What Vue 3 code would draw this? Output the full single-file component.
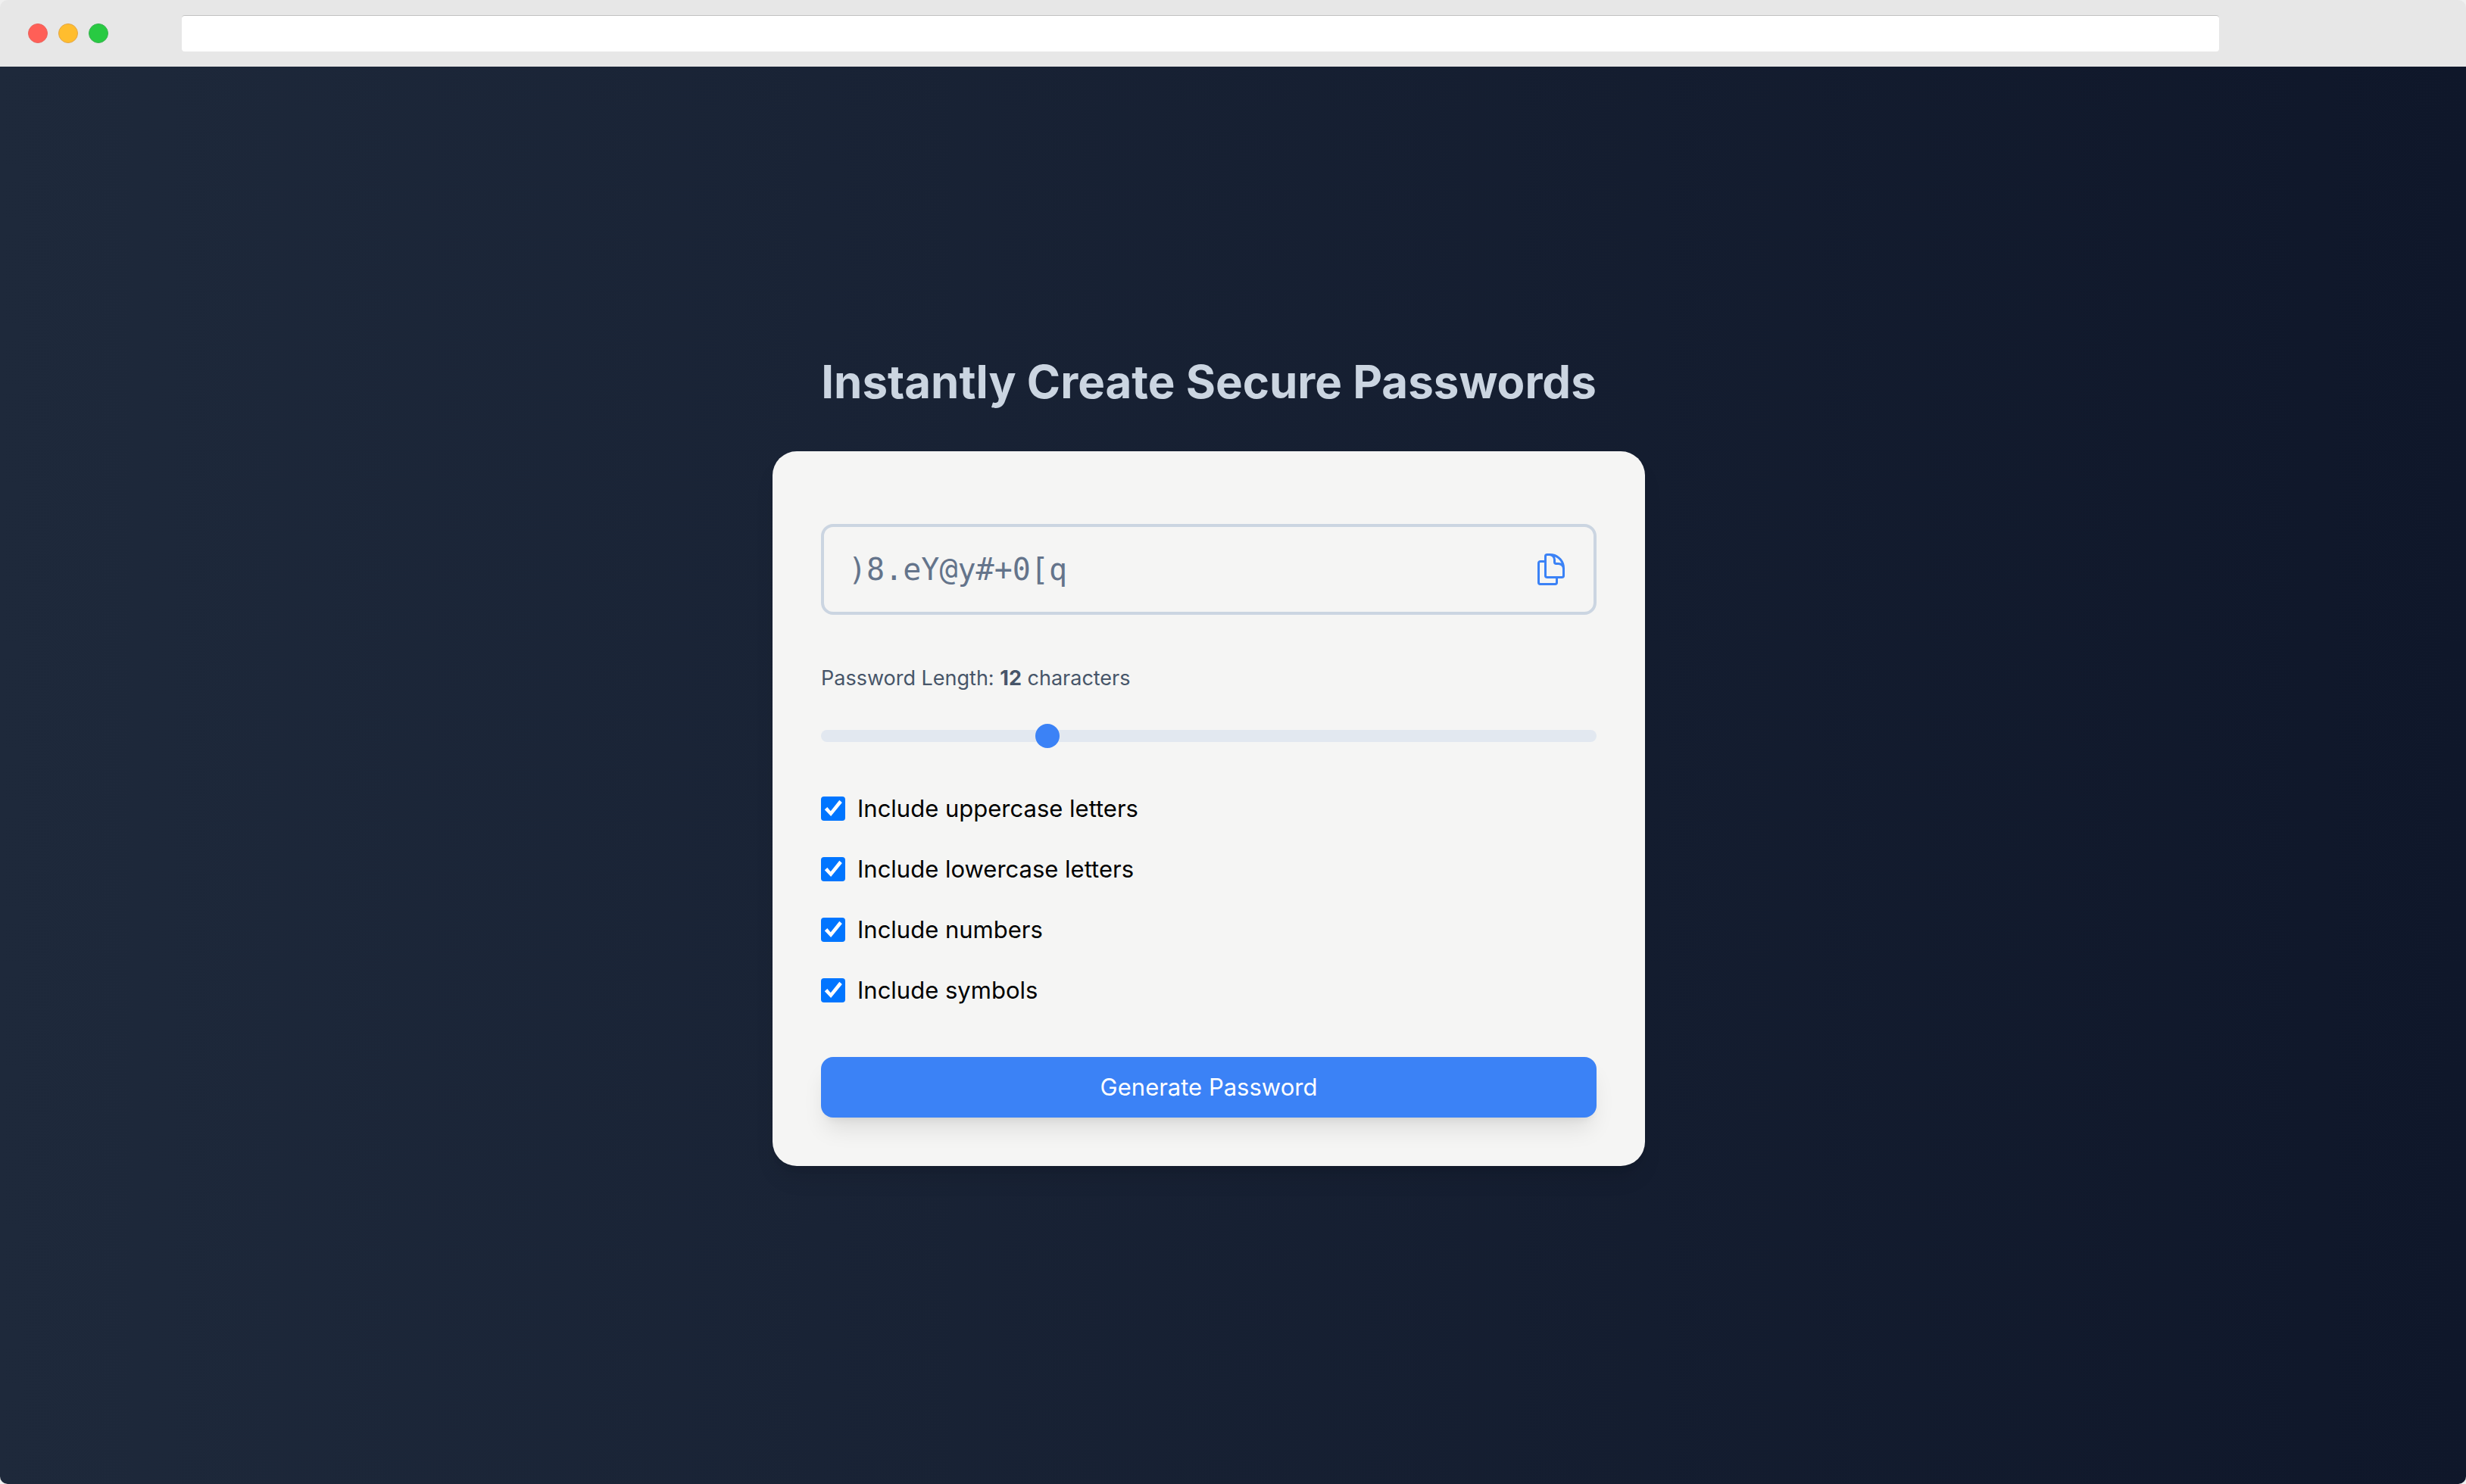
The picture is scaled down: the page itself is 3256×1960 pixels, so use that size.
<script setup>
import { reactive, ref } from 'vue'

const password = ref(')8.eY@y#+0[q')
const length = ref(12)

const options = reactive([
  { id: 'uppercase', label: 'Include uppercase letters', chars: 'ABCDEFGHIJKLMNOPQRSTUVWXYZ', on: true },
  { id: 'lowercase', label: 'Include lowercase letters', chars: 'abcdefghijklmnopqrstuvwxyz', on: true },
  { id: 'numbers', label: 'Include numbers', chars: '0123456789', on: true },
  { id: 'symbols', label: 'Include symbols', chars: '!@#$%^&*()_+[]{}.,?', on: true }
])

function generate() {
  const pool = options.filter((o) => o.on).map((o) => o.chars).join('')
  if (!pool) return
  const values = crypto.getRandomValues(new Uint32Array(Number(length.value)))
  password.value = Array.from(values, (v) => pool[v % pool.length]).join('')
}

function copy() {
  navigator.clipboard?.writeText(password.value)
}
</script>

<template>
  <div class="window">
    <header class="titlebar">
      <div class="lights">
        <span class="light red"></span>
        <span class="light amber"></span>
        <span class="light green"></span>
      </div>
      <input class="address" type="text" aria-label="Address" />
    </header>

    <main class="page">
      <h1>Instantly Create Secure Passwords</h1>

      <form class="card" @submit.prevent="generate">
        <div class="output">
          <input class="password" type="text" aria-label="Generated password" :value="password" readonly />
          <button class="copy" type="button" aria-label="Copy password" @click="copy">
            <svg viewBox="0 0 24 24" fill="none" stroke="currentColor" stroke-width="1.5" stroke-linecap="round" stroke-linejoin="round">
              <path d="M15.75 17.25v3.375c0 .621-.504 1.125-1.125 1.125h-9.75a1.125 1.125 0 0 1-1.125-1.125V7.875c0-.621.504-1.125 1.125-1.125H6.75a9.06 9.06 0 0 1 1.5.124m7.5 10.376h3.375c.621 0 1.125-.504 1.125-1.125V11.25c0-4.46-3.243-8.161-7.5-8.876a9.06 9.06 0 0 0-1.5-.124H9.375c-.621 0-1.125.504-1.125 1.125v3.5m7.5 10.375H9.375a1.125 1.125 0 0 1-1.125-1.125v-9.25m12 6.625v-1.875a3.375 3.375 0 0 0-3.375-3.375h-1.5a1.125 1.125 0 0 1-1.125-1.125v-1.5a3.375 3.375 0 0 0-3.375-3.375H9.75" />
            </svg>
          </button>
        </div>

        <label class="length" for="length">Password Length: <strong>{{ length }}</strong> characters</label>
        <input id="length" v-model="length" class="slider" type="range" min="4" max="32" />

        <div class="options">
          <div v-for="option in options" :key="option.id" class="option">
            <input :id="option.id" v-model="option.on" type="checkbox" />
            <label :for="option.id">{{ option.label }}</label>
          </div>
        </div>

        <button class="generate" type="submit">Generate Password</button>
      </form>
    </main>
  </div>
</template>

<style>
body {
  margin: 0;
  background: #f0f0f0;
}
</style>

<style scoped>
.window {
  display: flex;
  flex-direction: column;
  min-height: 100vh;
  border-radius: 10px;
  overflow: hidden;
  font-family: Inter, "Open Sans", sans-serif;
}

.titlebar {
  display: flex;
  align-items: center;
  gap: 97px;
  box-sizing: border-box;
  height: 88px;
  padding: 0 10% 0 37px;
  background: #e7e7e7;
}

.lights {
  display: flex;
  gap: 14px;
}

.light {
  box-sizing: border-box;
  width: 26px;
  height: 26px;
  border: 1px solid;
  border-radius: 50%;
}

.red {
  background: #ff5f57;
  border-color: #e9655f;
}

.amber {
  background: #ffbd2e;
  border-color: #e3a647;
}

.green {
  background: #28ca42;
  border-color: #3bb252;
}

.address {
  flex: 1;
  min-width: 0;
  box-sizing: border-box;
  height: 48px;
  padding: 0 16px;
  border: 0;
  border-top: 1px solid #c2c2c2;
  border-radius: 4px;
  background: #fff;
  font: inherit;
  font-size: 27px;
}

.page {
  flex: 1;
  display: flex;
  flex-direction: column;
  align-items: center;
  justify-content: center;
  padding: 0 64px 40px 0;
  background: linear-gradient(to right, #1e293b, #0f172a);
}

h1 {
  margin: 0 0 56px;
  color: #cbd5e1;
  font-size: 60px;
  font-weight: 700;
  line-height: 72px;
}

.card {
  display: flex;
  flex-direction: column;
  box-sizing: border-box;
  width: 100%;
  max-width: 1152px;
  padding: 96px 64px 64px;
  border-radius: 32px;
  background: #f5f5f4;
  box-shadow: 0 20px 30px -6px rgba(0, 0, 0, 0.1), 0 8px 12px -8px rgba(0, 0, 0, 0.1);
}

.output {
  display: flex;
  align-items: center;
  box-sizing: border-box;
  height: 120px;
  padding: 0 32px;
  border: 4px solid #cbd5e1;
  border-radius: 16px;
}

.password {
  flex: 1;
  min-width: 0;
  padding: 0;
  border: 0;
  outline: 0;
  background: transparent;
  color: #64748b;
  font-family: "DejaVu Sans Mono", monospace;
  font-size: 40px;
  line-height: 56px;
}

.copy {
  width: 48px;
  height: 48px;
  padding: 0;
  border: 0;
  background: none;
  color: #3b82f6;
  cursor: pointer;
}

.copy svg {
  display: block;
}

.length {
  margin-top: 64px;
  color: #475569;
  font-size: 27px;
  line-height: 40px;
}

.length strong {
  font-weight: 700;
}

.slider {
  appearance: none;
  width: 100%;
  height: 16px;
  margin: 48px 0 0;
  border-radius: 8px;
  background: #e2e8f0;
  cursor: pointer;
}

.slider::-webkit-slider-thumb {
  appearance: none;
  width: 32px;
  height: 32px;
  border-radius: 50%;
  background: #3b82f6;
}

.options {
  display: flex;
  flex-direction: column;
  gap: 32px;
  margin-top: 64px;
}

.option {
  display: flex;
  align-items: center;
  gap: 16px;
  color: #000;
  font-size: 31px;
  line-height: 48px;
}

.option input {
  appearance: none;
  box-sizing: border-box;
  width: 32px;
  height: 32px;
  margin: 0;
  border: 2px solid #767676;
  border-radius: 4px;
  background: #fff;
}

.option input:checked {
  border: 0;
  background: #0075ff;
}

.option input:checked::before {
  content: "";
  display: block;
  height: 100%;
  background: #fff;
  clip-path: polygon(15% 54%, 26% 44%, 40% 60%, 76% 15%, 87% 25%, 41% 81%);
}

.generate {
  margin-top: 64px;
  padding: 16px;
  border: 0;
  border-radius: 16px;
  background: #3b82f6;
  box-shadow: 0 20px 30px -6px rgba(0, 0, 0, 0.1), 0 8px 12px -8px rgba(0, 0, 0, 0.1);
  color: #fff;
  font-family: inherit;
  font-size: 31px;
  line-height: 48px;
  cursor: pointer;
}
</style>
